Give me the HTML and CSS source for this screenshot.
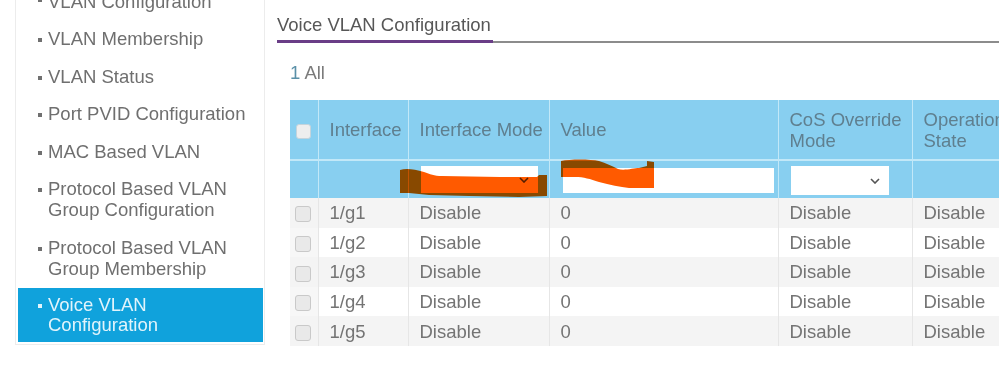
FILE: index.html
```html
<!DOCTYPE html>
<html>
<head>
<meta charset="utf-8">
<link rel="stylesheet" href="styles.css">
</head>
<body>
<div class="page">
  <nav class="sidebar">
    <ul class="menu">
      <li class="item">VLAN Configuration</li>
      <li class="item">VLAN Membership</li>
      <li class="item">VLAN Status</li>
      <li class="item">Port PVID Configuration</li>
      <li class="item">MAC Based VLAN</li>
      <li class="item">Protocol Based VLAN<br>Group Configuration</li>
      <li class="item">Protocol Based VLAN<br>Group Membership</li>
      <li class="item active">Voice VLAN<br>Configuration</li>
    </ul>
  </nav>
  <main class="main">
    <div class="tabbar">
      <div class="tab">Voice VLAN Configuration</div>
      <div class="tabrest"></div>
    </div>
    <div class="content">
      <div class="pager"><span class="num">1</span> All</div>
      <div class="tablewrap">
        <table class="grid">
          <colgroup>
            <col class="c-chk"><col class="c-if"><col class="c-mode"><col class="c-val"><col class="c-cos"><col class="c-op">
          </colgroup>
          <thead>
            <tr class="head">
              <th><span class="cb"></span></th>
              <th>Interface</th>
              <th>Interface Mode</th>
              <th>Value</th>
              <th>CoS Override<br>Mode</th>
              <th>Operational<br>State</th>
            </tr>
            <tr class="filter">
              <th></th>
              <th></th>
              <th><div class="sel sel-mode"><svg class="chev" viewBox="0 0 10 6" width="10" height="6"><path d="M1 1 L5 5 L9 1" fill="none" stroke="#555" stroke-width="1.6"/></svg></div></th>
              <th><div class="inp"></div></th>
              <th><div class="sel sel-cos"><svg class="chev" viewBox="0 0 10 6" width="10" height="6"><path d="M1 1 L5 5 L9 1" fill="none" stroke="#555" stroke-width="1.6"/></svg></div></th>
              <th></th>
            </tr>
          </thead>
          <tbody>
            <tr><td><span class="cb"></span></td><td>1/g1</td><td>Disable</td><td>0</td><td>Disable</td><td>Disable</td></tr>
            <tr><td><span class="cb"></span></td><td>1/g2</td><td>Disable</td><td>0</td><td>Disable</td><td>Disable</td></tr>
            <tr><td><span class="cb"></span></td><td>1/g3</td><td>Disable</td><td>0</td><td>Disable</td><td>Disable</td></tr>
            <tr><td><span class="cb"></span></td><td>1/g4</td><td>Disable</td><td>0</td><td>Disable</td><td>Disable</td></tr>
            <tr><td><span class="cb"></span></td><td>1/g5</td><td>Disable</td><td>0</td><td>Disable</td><td>Disable</td></tr>
          </tbody>
        </table>
        <svg class="scribble" viewBox="0 0 270 50" width="270" height="50">
          <path d="M10 15 C16 13 24 14 34 17 C40 19 44 21 52 21 L110 22 L147 22 L149 20 L157 20 L157 41 L129 42 L79 41 L39 40 L19 38 L10 38 Z" fill="#ff5a00"/>
          <path d="M171 6 C180 4 200 4 209 6 C216 8 222 11 228 14 C234 16 244 13 249 13 L257 11 L257 6 L264 7 L264 33 L239 33 C230 32 220 30 209 27 C200 24 194 22 185 22 L171 22 Z" fill="#ff5a00"/>
        </svg>
      </div>
    </div>
  </main>
</div>
</body>
</html>
```

FILE: styles.css
```css
* { box-sizing: border-box; }
html, body { margin: 0; padding: 0; background: #fff; }
body {
  font-family: "Liberation Sans", Arial, sans-serif;
  font-size: 18.5px;
  width: 999px;
  height: 375px;
  overflow: hidden;
}
.page {
  display: flex;
  align-items: flex-start;
}
.sidebar {
  width: 250px;
  margin-left: 15px;
  margin-top: -21px;
  border: 1px solid #ececec;
  border-top: none;
  padding-bottom: 2px;
  flex: none;
}
.menu {
  list-style: none;
  margin: 0;
  padding: 0;
}
.item {
  position: relative;
  padding: 8.25px 8px 8.25px 32px;
  line-height: 21px;
  color: #6f6f6f;
}
.item:first-child { padding-top: 11.5px; }
.item::before {
  content: "";
  position: absolute;
  left: 22px;
  top: 18.5px;
  width: 4px;
  height: 4px;
  background: #707070;
}
.item.active {
  background: #10a2dc;
  color: #e2f4fb;
  line-height: 19.5px;
  margin: 1.25px 1px 0 2px;
  padding-top: 7px;
  padding-bottom: 8px;
  padding-left: 30px;
}
.item.active::before { background: #e2f4fb; left: 20px; top: 16px; }

.main {
  flex: 1;
  min-width: 0;
  overflow: hidden;
  padding-left: 12px;
}
.tabbar {
  display: flex;
  align-items: flex-end;
  margin-top: 14px;
}
.tab {
  color: #575757;
  line-height: 21px;
  padding-bottom: 5px;
  padding-right: 2px;
  border-bottom: 3px solid #6a3d87;
  flex: none;
}
.tabrest {
  flex: 1;
  border-bottom: 2px solid #8c8c8c;
}
.content {
  padding-left: 13px;
}
.pager {
  margin-top: 19px;
  line-height: 21px;
  color: #7b7b7b;
}
.pager .num { color: #5a90a8; }
.tablewrap {
  position: relative;
  margin-top: 17px;
  width: 760px;
}
.grid {
  border-collapse: collapse;
  table-layout: fixed;
  width: 760px;
}
.c-chk { width: 28px; }
.c-if { width: 90px; }
.c-mode { width: 141px; }
.c-val { width: 229px; }
.c-cos { width: 134px; }
.c-op { width: 138px; }
.grid th {
  background: #88cff0;
  color: #5f7f8f;
  font-weight: normal;
  text-align: left;
  line-height: 21px;
  padding: 0 4px 0 11px;
  border-left: 1px solid #c2e8f8;
  border-bottom: 2px solid #c2e8f8;
  white-space: nowrap;
}
.grid th:first-child { border-left: none; padding: 0 0 0 6px; }
.head th { height: 60px; }
.filter th { height: 38px; padding-top: 0; padding-bottom: 0; border-bottom: none; }
.grid td {
  height: 29.6px;
  line-height: 21px;
  color: #747474;
  padding: 0 4px 0 11px;
  border-left: 1px solid #e6e6e6;
  white-space: nowrap;
}
.grid td:first-child { border-left: none; padding: 0 0 0 5px; }
.grid tbody tr:nth-child(odd) td { background: #f4f4f4; }
.grid tbody tr:nth-child(even) td { background: #fff; }
.grid tbody tr:nth-child(even) td:first-child { background: #f7f7f7; }
.cb {
  display: inline-block;
  width: 16px;
  height: 16px;
  border: 1px solid #c9c9c9;
  border-radius: 3px;
  background: #e9e9e9;
  vertical-align: middle;
}
.head .cb { width: 15px; height: 15px; background: #eeeeee; border-color: #c4d4dc; }
.sel, .inp {
  background: #fff;
  height: 27px;
  display: flex;
  align-items: center;
  justify-content: flex-end;
  padding-right: 9px;
}
.sel-mode { width: 117px; margin-left: 1px; }
.inp { width: 211px; height: 25px; margin-left: 2px; margin-top: 2px; }
.sel-cos { width: 98px; height: 29px; margin-left: 1px; margin-top: 2px; }
.chev { display: block; }
.scribble {
  position: absolute;
  left: 100px;
  top: 55px;
  mix-blend-mode: multiply;
}
```
